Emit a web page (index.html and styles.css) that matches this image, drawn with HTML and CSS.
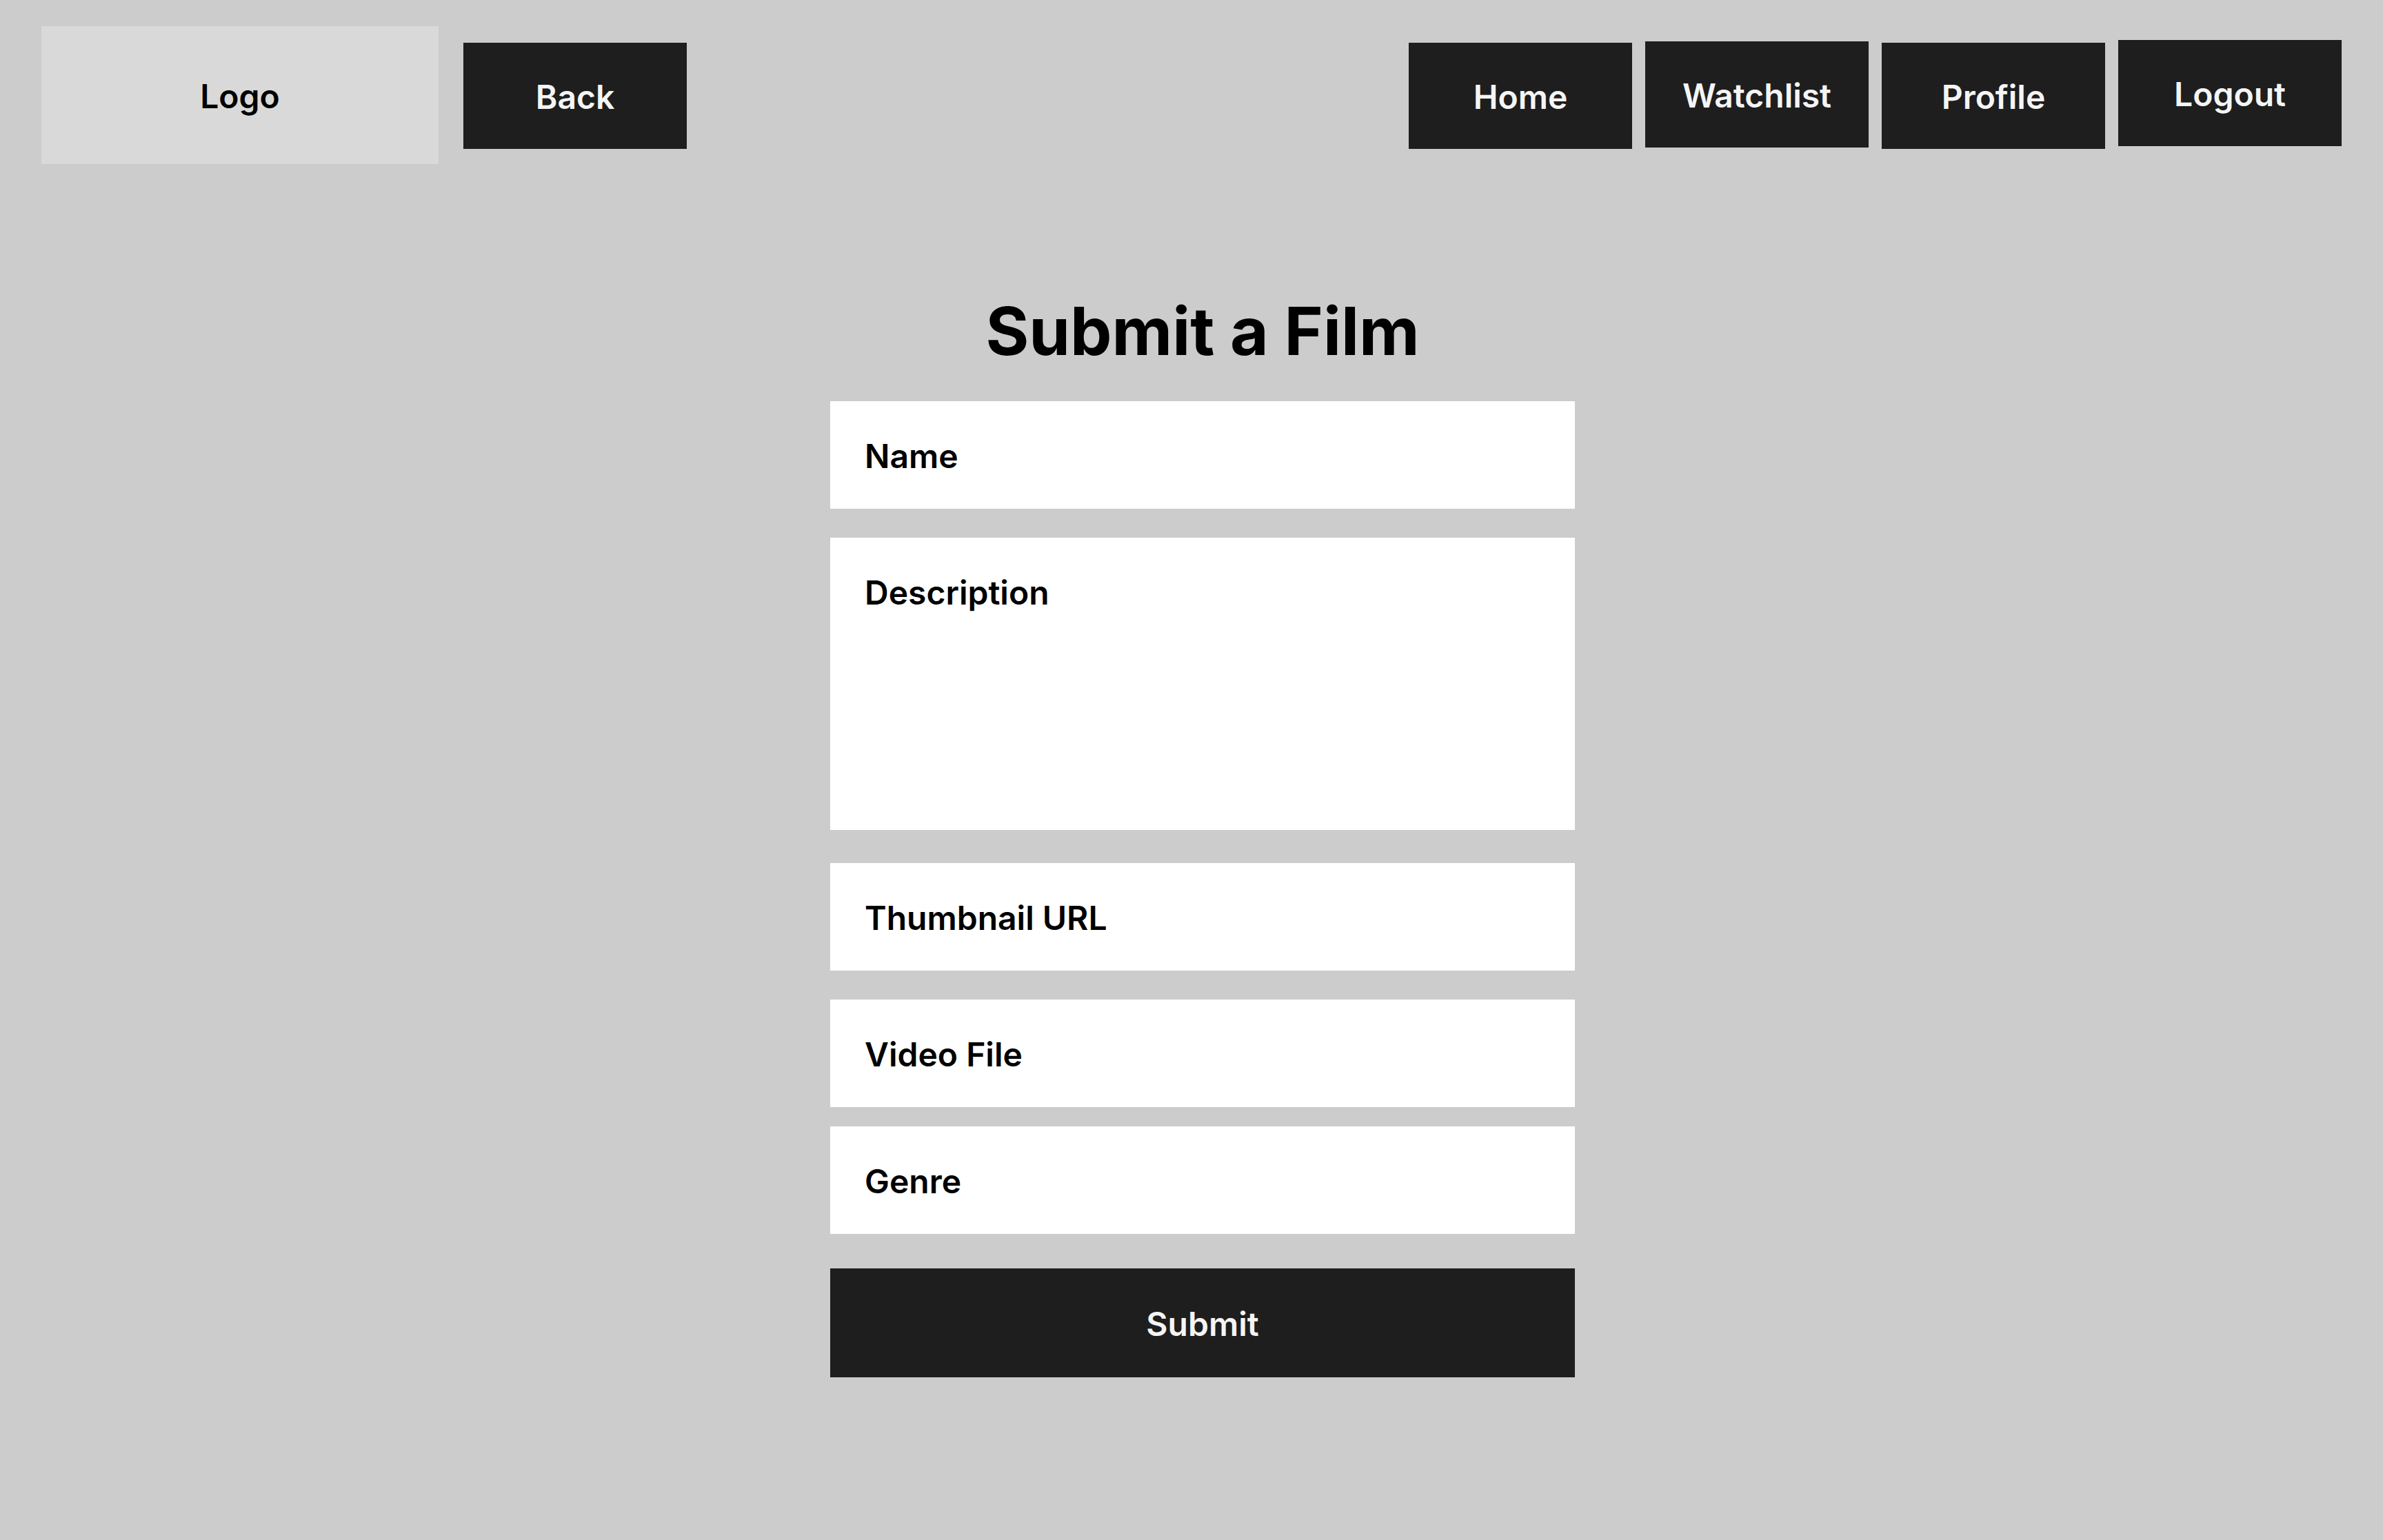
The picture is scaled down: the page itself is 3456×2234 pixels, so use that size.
FILE: index.html
```html
<!DOCTYPE html>
<html lang="en">
<head>
<meta charset="utf-8">
<title>Submit a Film</title>
<link rel="stylesheet" href="styles.css">
</head>
<body>
<header class="topbar">
  <div class="left-group">
    <div class="logo">Logo</div>
    <a class="btn back-btn" href="#">Back</a>
  </div>
  <nav class="nav">
    <a class="btn" href="#">Home</a>
    <a class="btn btn-up2" href="#">Watchlist</a>
    <a class="btn" href="#">Profile</a>
    <a class="btn btn-up4" href="#">Logout</a>
  </nav>
</header>
<main class="main">
  <h1 class="title">Submit a Film</h1>
  <form class="form">
    <div class="field">Name</div>
    <div class="field field-tall gap-42">Description</div>
    <div class="field gap-48">Thumbnail URL</div>
    <div class="field gap-42">Video File</div>
    <div class="field gap-28">Genre</div>
    <button class="submit" type="button">Submit</button>
  </form>
</main>
</body>
</html>
```

FILE: styles.css
```css
* { box-sizing: border-box; }
html, body {
  margin: 0;
  padding: 0;
  background: #cccccc;
}
body {
  font-family: Inter, "Noto Sans", "Liberation Sans", sans-serif;
  min-height: 2234px;
}
.topbar {
  display: flex;
  justify-content: space-between;
  align-items: flex-start;
  padding: 38px 60px 0 60px;
}
.left-group {
  display: flex;
  align-items: flex-start;
  gap: 36px;
}
.logo {
  width: 576px;
  height: 200px;
  padding-top: 4px;
  background: #d9d9d9;
  color: #000;
  font-size: 48px;
  font-weight: 600;
  line-height: 58px;
  display: flex;
  align-items: center;
  justify-content: center;
}
.btn {
  width: 324px;
  height: 154px;
  padding-top: 4px;
  background: #1e1e1e;
  color: #f5f5f5;
  font-size: 48px;
  font-weight: 600;
  line-height: 58px;
  text-decoration: none;
  display: flex;
  align-items: center;
  justify-content: center;
}
.back-btn { margin-top: 24px; }
.nav {
  display: flex;
  align-items: flex-start;
  gap: 19px;
  padding-top: 24px;
}
.btn-up2 { margin-top: -2px; }
.btn-up4 { margin-top: -4px; }
.main {
  display: flex;
  flex-direction: column;
  align-items: center;
  padding-left: 32px;
}
.title {
  margin: 184px 0 0 0;
  font-size: 96px;
  font-weight: 700;
  line-height: 116px;
  color: #000;
}
.form {
  width: 1080px;
  margin-top: 44px;
  display: flex;
  flex-direction: column;
}
.field {
  background: #ffffff;
  color: #000;
  font-size: 48px;
  font-weight: 600;
  line-height: 58px;
  padding: 51px 50px 47px 50px;
  height: 156px;
}
.field-tall { height: 424px; }
.gap-42 { margin-top: 42px; }
.gap-48 { margin-top: 48px; }
.gap-28 { margin-top: 28px; }
.submit {
  margin-top: 50px;
  height: 158px;
  width: 100%;
  border: none;
  background: #1e1e1e;
  color: #f5f5f5;
  font-family: inherit;
  font-size: 48px;
  font-weight: 600;
  line-height: 58px;
  padding: 4px 0 0 0;
}
```
